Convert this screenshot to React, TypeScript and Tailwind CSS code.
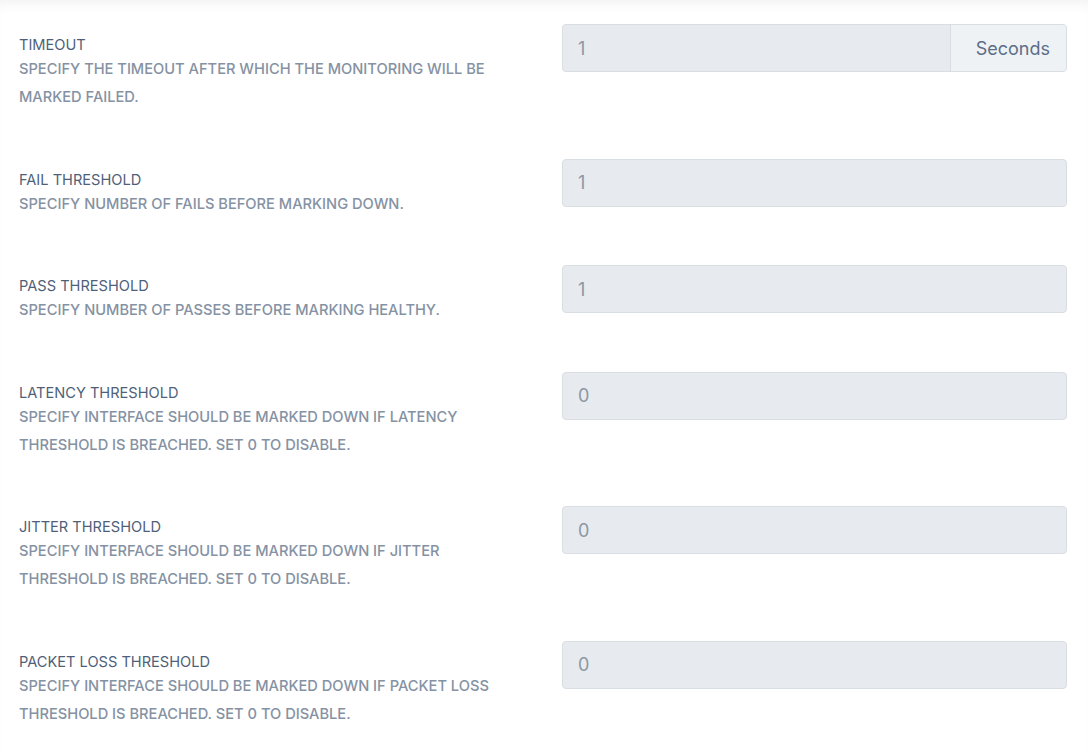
import React from "react";

type Row = { title: string; desc: string; value: string; addon?: string };

const rows: Row[] = [
  { title: "TIMEOUT", desc: "SPECIFY THE TIMEOUT AFTER WHICH THE MONITORING WILL BE MARKED FAILED.", value: "1", addon: "Seconds" },
  { title: "FAIL THRESHOLD", desc: "SPECIFY NUMBER OF FAILS BEFORE MARKING DOWN.", value: "1" },
  { title: "PASS THRESHOLD", desc: "SPECIFY NUMBER OF PASSES BEFORE MARKING HEALTHY.", value: "1" },
  { title: "LATENCY THRESHOLD", desc: "SPECIFY INTERFACE SHOULD BE MARKED DOWN IF LATENCY THRESHOLD IS BREACHED. SET 0 TO DISABLE.", value: "0" },
  { title: "JITTER THRESHOLD", desc: "SPECIFY INTERFACE SHOULD BE MARKED DOWN IF JITTER THRESHOLD IS BREACHED. SET 0 TO DISABLE.", value: "0" },
  { title: "PACKET LOSS THRESHOLD", desc: "SPECIFY INTERFACE SHOULD BE MARKED DOWN IF PACKET LOSS THRESHOLD IS BREACHED. SET 0 TO DISABLE.", value: "0" },
];

export default function App() {
  return (
    <div className="min-h-[752px] w-[1088px] bg-white pt-6 pl-[19px] pr-[21px] font-['Inter','Noto_Sans',sans-serif] shadow-[inset_0_12px_14px_-10px_rgba(0,0,0,0.07)]">
      <div className="flex flex-col gap-[47.5px]">
        {rows.map((r) => (
          <div key={r.title} className="flex justify-between items-start">
            <div className="pt-[11px] w-[500px]">
              <div className="text-[14.6px] leading-5 text-[#4f5f79]">{r.title}</div>
              <div className="text-[14.65px] leading-7 font-medium text-[#8592a3]">{r.desc}</div>
            </div>
            <div className="flex w-[505px] h-12 rounded-[4px] border border-[#d9dee3] bg-[#e7ebef] overflow-hidden">
              <div className="flex-1 flex items-center pl-[15px] text-[18px] text-[#8d97a3]">{r.value}</div>
              {r.addon && (
                <div className="w-[116px] flex items-center justify-end pr-[16px] border-l border-[#d9dee3] bg-[#eff2f5] text-[18px] text-[#5b6e88]">
                  {r.addon}
                </div>
              )}
            </div>
          </div>
        ))}
      </div>
    </div>
  );
}
